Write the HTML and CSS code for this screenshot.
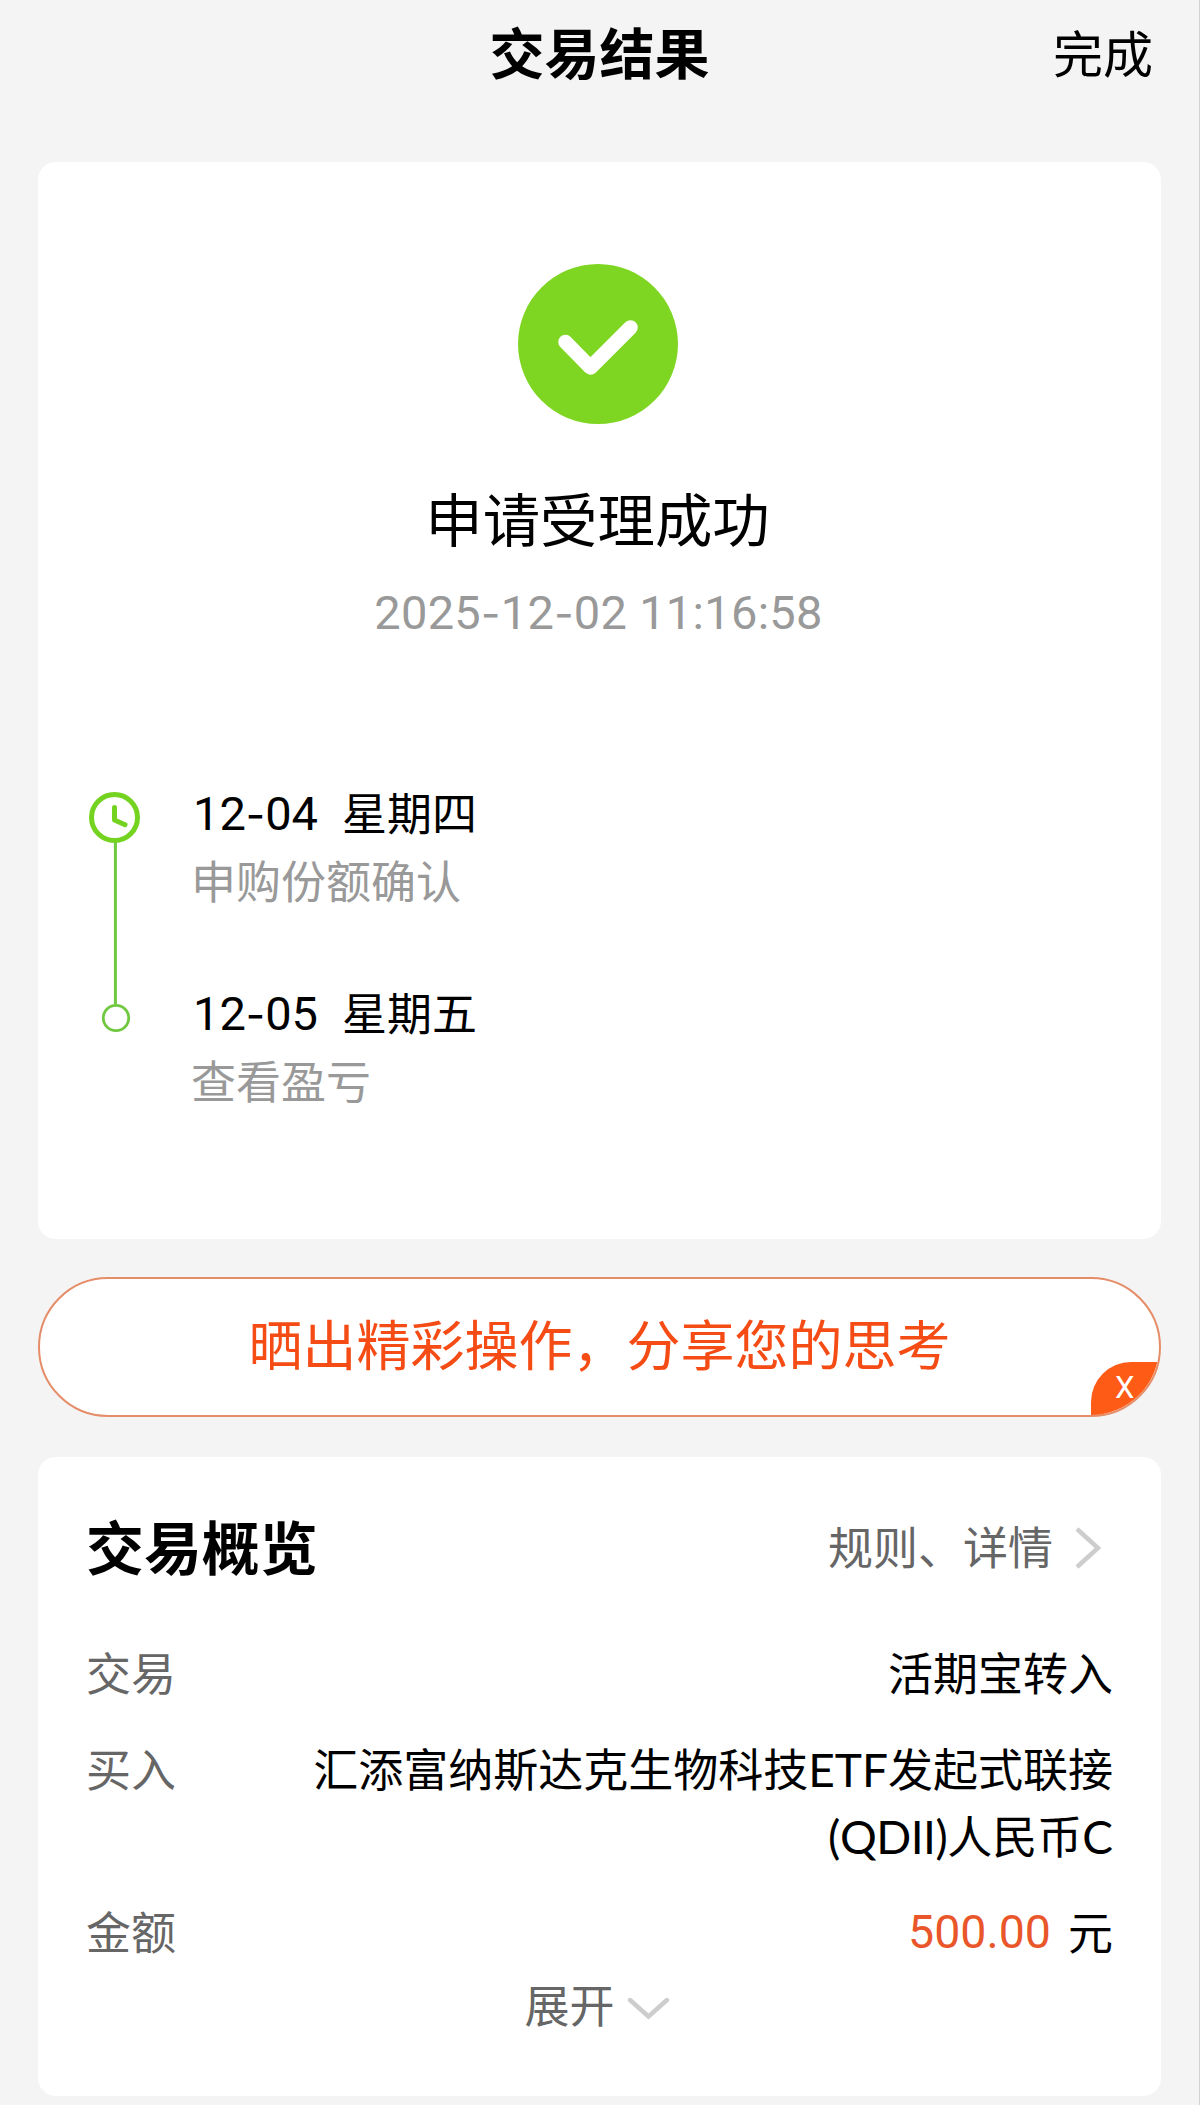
FILE: index.html
```html
<!DOCTYPE html>
<html lang="zh-CN">
<head>
<meta charset="utf-8">
<title>交易结果</title>
<link rel="stylesheet" href="styles.css">
</head>
<body>
<div class="page">
  <header class="topbar">
    <h1 class="topbar-title">交易结果</h1>
    <a class="topbar-done">完成</a>
  </header>

  <section class="card result">
    <svg class="result-icon" width="160" height="160" viewBox="0 0 160 160">
      <circle cx="80" cy="80" r="80" fill="#7fd622"/>
      <path d="M47.5 78 L72.5 103.5 L112.5 63.5" fill="none" stroke="#fff" stroke-width="14.5" stroke-linecap="round" stroke-linejoin="round"/>
    </svg>
    <h2 class="result-title">申请受理成功</h2>
    <p class="result-time">2025<span class="dash">-</span>12<span class="dash">-</span>02 11:16:58</p>
    <div class="steps">
      <svg class="steps-track" width="54" height="244" viewBox="0 0 54 244">
        <path d="M27.4 52 V214" stroke="#70c840" stroke-width="3"/>
        <circle cx="26.5" cy="27.5" r="23" fill="#fff" stroke="#74d321" stroke-width="5"/>
        <path d="M26.5 17.5 V30 L37 34.7" fill="none" stroke="#74d321" stroke-width="5" stroke-linecap="round" stroke-linejoin="round"/>
        <circle cx="28" cy="228" r="12.7" fill="#fff" stroke="#70c840" stroke-width="2.8"/>
      </svg>
      <ol class="steps-list">
        <li class="step">
          <p class="step-date"><span class="num">12<span class="dash">-</span>04</span><span>星期四</span></p>
          <p class="step-note">申购份额确认</p>
        </li>
        <li class="step">
          <p class="step-date"><span class="num">12<span class="dash">-</span>05</span><span>星期五</span></p>
          <p class="step-note">查看盈亏</p>
        </li>
      </ol>
    </div>
  </section>

  <div class="share">
    <span class="share-text">晒出精彩操作，分享您的思考</span>
    <span class="share-close">X</span>
  </div>

  <section class="card overview">
    <div class="overview-head">
      <h2 class="overview-title">交易概览</h2>
      <a class="overview-link">规则、详情
        <svg width="30" height="46" viewBox="0 0 30 46"><path d="M4 4 L25 23 L4 42" fill="none" stroke="#cdcdcd" stroke-width="4.4"/></svg>
      </a>
    </div>
    <dl class="rows">
      <div class="row"><dt>交易</dt><dd>活期宝转入</dd></div>
      <div class="row"><dt>买入</dt><dd>汇添富纳斯达克生物科技<span class="latin">ETF</span>发起式联接<br><span class="latin qdii">(QDII)</span>人民币<span class="latin">C</span></dd></div>
      <div class="row"><dt>金额</dt><dd class="amount"><span class="num money">500.00</span><span>元</span></dd></div>
    </dl>
    <a class="expand">展开
      <svg width="44" height="28" viewBox="0 0 44 28"><path d="M4 5 L22.5 21.5 L41 5" fill="none" stroke="#cdcdcd" stroke-width="4.4" stroke-linecap="round"/></svg>
    </a>
  </section>
</div>
</body>
</html>
```
FILE: styles.css
```css
* {
  box-sizing: border-box;
  margin: 0;
  padding: 0;
}

body {
  background: #f4f4f4;
  color: #000;
  font-family: "Noto Sans CJK SC", sans-serif;
  font-size: 45px;
}

.page {
  width: 1200px;
  height: 2105px;
  padding: 0 38px;
  border-right: 1px solid #d2d2d2;
  overflow: hidden;
}

.topbar {
  display: grid;
  grid-template-columns: 1fr auto 1fr;
  height: 162px;
  padding-top: 10px;
  line-height: 80px;
}

.topbar-title {
  grid-column: 2;
  font-size: 55px;
  font-weight: 700;
}

.topbar-done {
  justify-self: end;
  padding: 1px 8px 0 0;
  font-size: 50px;
}

.card {
  background: #fff;
  border-radius: 18px;
}

.result {
  display: flex;
  flex-direction: column;
  align-items: center;
  height: 1077px;
  padding: 102px 50px 0;
}

.result-icon {
  margin-right: 3px;
}

.result-title {
  margin: 53px 4px 0 0;
  font-size: 57.4px;
  font-weight: 400;
  line-height: 80px;
}

.result-time {
  margin: 26px 2px 0 0;
  color: #999;
  font-family: Roboto, sans-serif;
  font-size: 47px;
  letter-spacing: 0.3px;
  line-height: 60px;
}

.dash {
  font-family: Inter, sans-serif;
  font-size: 42px;
  line-height: 1;
}

.steps {
  display: flex;
  align-self: stretch;
  gap: 49px;
  margin-top: 135px;
}

.steps-track {
  flex: none;
  margin-top: 12px;
}

.steps-list {
  list-style: none;
}

.step {
  height: 200px;
  line-height: 68px;
}

.step-date {
  display: flex;
  gap: 24px;
}

.step-date .num {
  padding: 2px 0 0 2px;
  margin-bottom: -2px;
}

.step-note {
  color: #999;
}

.num {
  font-family: Roboto, sans-serif;
  font-size: 47px;
}

.share {
  position: relative;
  display: flex;
  justify-content: center;
  height: 140px;
  margin: 38px 0 40px;
  border: 2px solid #e58d68;
  border-radius: 70px;
  background: #fff;
  overflow: hidden;
  color: #f54c15;
  font-size: 54px;
  line-height: 127px;
}

.share-close {
  position: absolute;
  right: 0;
  bottom: 0;
  width: 68px;
  height: 53px;
  padding-left: 24px;
  border-top-left-radius: 40px;
  background: #fd5b16;
  color: #fff;
  font-family: Roboto, sans-serif;
  font-size: 31px;
  font-weight: 400;
  line-height: 51px;
}

.overview {
  height: 639px;
  padding: 43px 48px 0;
}

.overview-head {
  display: flex;
  justify-content: space-between;
  height: 90px;
  line-height: 90px;
}

.overview-title {
  font-size: 57.9px;
  font-weight: 700;
}

.overview-link {
  display: flex;
  align-items: center;
  gap: 20px;
  padding: 2px 10px 0 0;
  color: #666;
}

.overview-link svg {
  margin-top: 3px;
}

.rows {
  display: flex;
  flex-direction: column;
  gap: 29px;
  margin-top: 48px;
  line-height: 67px;
}

.row {
  display: flex;
  justify-content: space-between;
}

.row dt {
  color: #666;
}

.row dd {
  text-align: right;
}

.latin {
  font-family: Lato, sans-serif;
  font-size: 46px;
  line-height: 1;
}

.qdii {
  letter-spacing: -0.5px;
}

.row .amount {
  display: flex;
  gap: 17px;
}

.money {
  margin-bottom: -2px;
  padding-top: 2px;
  color: #e9562a;
  font-size: 46.5px;
}

.expand {
  display: flex;
  justify-content: center;
  align-items: center;
  gap: 11px;
  margin: 6px 5px 0 0;
  color: #666;
  line-height: 67px;
}

.expand svg {
  margin-top: 10px;
}
```
